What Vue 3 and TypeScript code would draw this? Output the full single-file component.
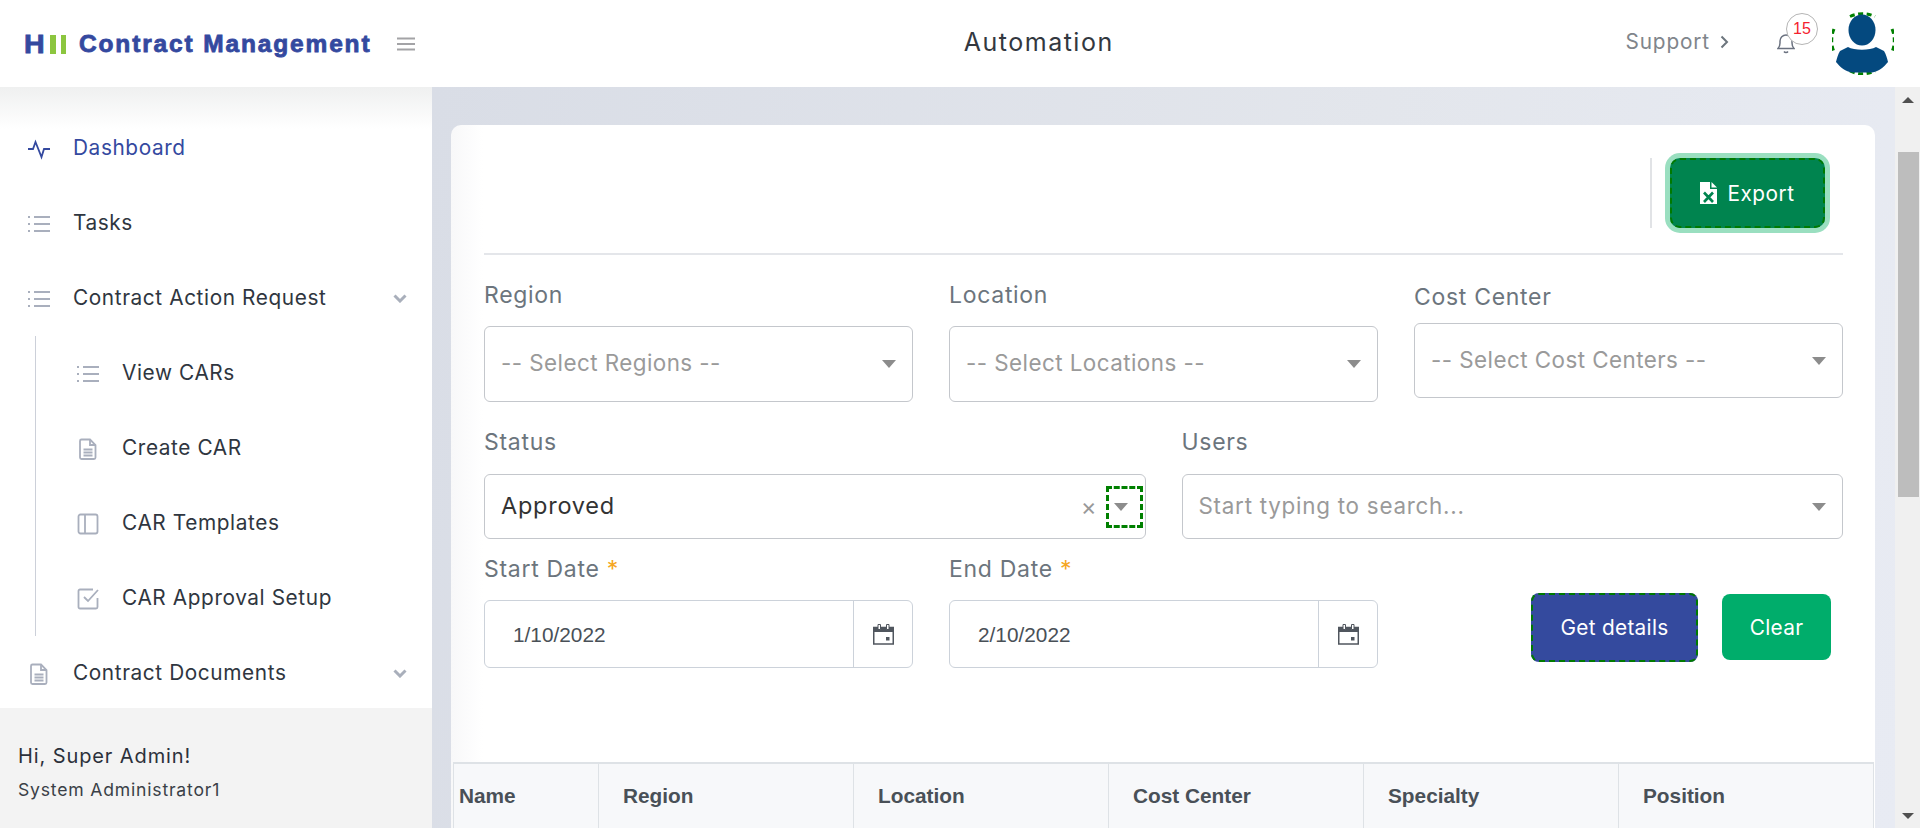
<template>
  <div class="page">
    <header class="topbar">
      <div class="brand">
        <span class="brand-h">H</span>
        <span class="brand-bars"><i></i><i></i></span>
        <span class="brand-name">Contract Management</span>
        <svg class="burger" width="18" height="14" viewBox="0 0 18 14"><path d="M0 1.5h18M0 7h18M0 12.5h18" stroke="#a3a3a6" stroke-width="2" /></svg>
      </div>
      <div class="title">Automation</div>
      <div class="top-right">
        <a class="support">Support
          <svg width="9" height="14" viewBox="0 0 9 14"><path d="M1.5 1.5 7 7l-5.500 5.500" fill="none" stroke="#6c757d" stroke-width="2" /></svg>
        </a>
        <div class="bell">
          <svg width="18" height="21" viewBox="0 0 18 21" fill="none" stroke="#6b7280" stroke-width="1.500"><path d="M1 15.500c1.500-1.500 2-2.500 2-5.500V8a6 6 0 0 1 12 0v2c0 3 .5 4 2 5.500z" /><path d="M7 18.500c.8 1.200 3.200 1.200 4 0" /></svg>
          <span class="badge">15</span>
        </div>
        <div class="avatar">
          <svg width="62" height="63" viewBox="0 0 62 63">
            <g fill="none" stroke="#008000" stroke-width="3" stroke-dasharray="5 3.500">
              <path d="M18 4.500A30 30 0 0 1 43 4.500" />
              <path d="M18 59A30 30 0 0 0 43 59" />
              <path d="M2 17A30 30 0 0 0 2 40" />
              <path d="M60 17A30 30 0 0 1 60 40" />
            </g>
            <ellipse cx="30" cy="18" rx="13.500" ry="15.500" fill="#04497f" />
            <path d="M16 35C22 38.500 38 38.500 44 35L52 39C54 42 55 46 56 50C52 55 46 60 40 60.500L20 60.500C14 60 8 55 4 50C5 46 6 42 8 39Z" fill="#04497f" />
          </svg>
        </div>
      </div>
    </header>

    <div class="body">
      <aside class="sidebar">
        <nav class="nav">
          <template v-for="item in navItems" :key="item.label">
            <a class="nav-item" :class="{ active: item.active }">
              <span class="nav-icon" v-html="icons[item.icon]"></span>
              <span class="nav-label">{{ item.label }}</span>
              <svg v-if="item.chevron" class="chev" width="14" height="9" viewBox="0 0 14 9"><path d="M1.500 1.500 7 7l5.500-5.500" fill="none" stroke="#a9afbb" stroke-width="3" /></svg>
            </a>
            <div v-if="item.children" class="subnav">
              <a v-for="child in item.children" :key="child.label" class="nav-item sub">
                <span class="nav-icon" v-html="icons[child.icon]"></span>
                <span class="nav-label">{{ child.label }}</span>
              </a>
            </div>
          </template>
        </nav>
        <div class="user-box">
          <div class="hi">Hi, Super Admin!</div>
          <div class="role">System Administrator1</div>
        </div>
      </aside>

      <main class="main">
        <section class="card">
          <div class="toolbar">
            <span class="vline"></span>
            <button class="export">
              <svg width="17" height="22" viewBox="0 0 17 22"><path d="M0 0h10v7h7v15H0z" fill="#fff" /><path d="M11.500 0 17 5.500h-5.500z" fill="#fff" /><path d="M4 10.500l9 9.500M13 10.500l-9 9.500" stroke="#00844f" stroke-width="2.600" /></svg>
              Export
            </button>
          </div>

          <div class="filters">
            <div class="row three">
              <div class="field">
                <label>Region</label>
                <div class="select tall"><span class="ph">-- Select Regions --</span><i class="caret"></i></div>
              </div>
              <div class="field">
                <label>Location</label>
                <div class="select tall"><span class="ph">-- Select Locations --</span><i class="caret"></i></div>
              </div>
              <div class="field cost">
                <label>Cost Center</label>
                <div class="select cost-box"><span class="ph">-- Select Cost Centers --</span><i class="caret"></i></div>
              </div>
            </div>
            <div class="row two">
              <div class="field mid">
                <label>Status</label>
                <div class="select short">
                  <span class="val">Approved</span>
                  <span class="clear-x">×</span>
                  <span class="focus-box"><i class="caret"></i></span>
                </div>
              </div>
              <div class="field mid">
                <label>Users</label>
                <div class="select short"><span class="ph">Start typing to search...</span><i class="caret"></i></div>
              </div>
            </div>
            <div class="row three">
              <div class="field date">
                <label>Start Date <em>*</em></label>
                <div class="date-box">
                  <span class="date-val">1/10/2022</span>
                  <span class="cal" v-html="calendar"></span>
                </div>
              </div>
              <div class="field date">
                <label>End Date <em>*</em></label>
                <div class="date-box">
                  <span class="date-val">2/10/2022</span>
                  <span class="cal" v-html="calendar"></span>
                </div>
              </div>
              <div class="actions">
                <button class="btn details">Get details</button>
                <button class="btn clear">Clear</button>
              </div>
            </div>
          </div>

          <table class="grid">
            <thead>
              <tr>
                <th v-for="col in columns" :key="col">{{ col }}</th>
              </tr>
            </thead>
          </table>
        </section>
      </main>

      <div class="scrollbar">
        <i class="arrow up"></i>
        <div class="track"><div class="thumb"></div></div>
        <i class="arrow down"></i>
      </div>
    </div>
  </div>
</template>

<script setup lang="ts">
interface NavChild { label: string; icon: string }
interface NavItem extends NavChild { active?: boolean; chevron?: boolean; children?: NavChild[] }

const svg = (inner: string) =>
  `<svg width="22" height="22" viewBox="0 0 22 22" fill="none" stroke="#a9afbd" stroke-width="1.800">${inner}</svg>`;

const icons: Record<string, string> = {
  activity: `<svg width="22" height="22" viewBox="0 0 22 22" fill="none" stroke="#34499f" stroke-width="1.800"><path d="M0 11h5l2.500-7 6 15 2.500-8h6" /></svg>`,
  list: svg('<path d="M6 4h16M6 11h16M6 18h16" /><path d="M0 4h2M0 11h2M0 18h2" />'),
  file: svg('<path d="M3.500 3a1.500 1.500 0 0 1 1.500-1.500h8.500L19 7v12.500a1.500 1.500 0 0 1-1.500 1.500H5a1.500 1.500 0 0 1-1.500-1.500z" transform="translate(-.5 0)" /><path d="M13 2v5h5.500M6.500 11.500h9M6.500 14.500h9M6.500 17.500h9" />'),
  side: svg('<rect x="1.500" y="1.500" width="19" height="19" rx="2" /><path d="M8 1.500v19" />'),
  check: svg('<path d="M20.500 10v9a1.500 1.500 0 0 1-1.500 1.500H3A1.500 1.500 0 0 1 1.500 19V3A1.500 1.500 0 0 1 3 1.500h13" /><path d="M7 9l4 4L21 2" />'),
};

const calendar = `<svg width="21" height="21" viewBox="0 0 21 21"><rect x="0.750" y="3.500" width="19.500" height="16.500" fill="none" stroke="#50565e" stroke-width="1.500" /><path d="M0 3h21v5H0z" fill="#50565e" /><path d="M5 .5h2.500v5H5zM13.500 .5H16v5h-2.500z" fill="#fff" stroke="#50565e" stroke-width="1" /><rect x="13" y="13" width="3.500" height="3.500" fill="#50565e" /></svg>`;

const navItems: NavItem[] = [
  { label: 'Dashboard', icon: 'activity', active: true },
  { label: 'Tasks', icon: 'list' },
  {
    label: 'Contract Action Request',
    icon: 'list',
    chevron: true,
    children: [
      { label: 'View CARs', icon: 'list' },
      { label: 'Create CAR', icon: 'file' },
      { label: 'CAR Templates', icon: 'side' },
      { label: 'CAR Approval Setup', icon: 'check' },
    ],
  },
  { label: 'Contract Documents', icon: 'file', chevron: true },
];

const columns = ['Name', 'Region', 'Location', 'Cost Center', 'Specialty', 'Position'];
</script>

<style>
html,
body {
  margin: 0;
  height: 100%;
  overflow: hidden;
  background: #fff;
}
</style>

<style scoped>
.page {
  height: 100vh;
  display: flex;
  flex-direction: column;
  font-family: Inter, "Liberation Sans", sans-serif;
  color: #2f3640;
  overflow: hidden;
}

.topbar {
  height: 87px;
  flex: none;
  display: flex;
  align-items: center;
  background: #fff;
  position: relative;
}

.brand {
  width: 432px;
  flex: none;
  box-sizing: border-box;
  padding-left: 24px;
  display: flex;
  align-items: center;
  color: #34499f;
  padding-top: 1px;
}

.brand-h {
  font: 700 26px "Liberation Sans", sans-serif;
  -webkit-text-stroke: 0.8px #34499f;
  width: 26px;
  transform: scaleX(1.1);
  transform-origin: left center;
}

.brand-bars {
  display: flex;
  gap: 5px;
  width: 29px;
}

.brand-bars i {
  width: 5.500px;
  height: 19px;
  background: #8cc63f;
}

.brand-name {
  width: 292px;
  font: 700 24.500px "Liberation Sans", sans-serif;
  -webkit-text-stroke: 0.8px #34499f;
  letter-spacing: 1.850px;
  white-space: nowrap;
}

.burger {
  margin-left: 26px;
}

.title {
  flex: 1;
  padding: 0 0 3px 20px;
  text-align: center;
  font-size: 25px;
  letter-spacing: 1.500px;
  color: #33383f;
}

.top-right {
  display: flex;
  align-items: center;
  padding-right: 26px;
}

.support {
  font-size: 20.800px;
  letter-spacing: 0.850px;
  color: #80858b;
  display: flex;
  align-items: center;
  gap: 10px;
  margin-right: 48px;
  padding-bottom: 4px;
}

.bell {
  position: relative;
  width: 18px;
  height: 21px;
  margin-right: 37px;
}

.badge {
  position: absolute;
  left: 9px;
  top: -20px;
  width: 30px;
  height: 30px;
  border: 1px solid #b5b5b5;
  border-radius: 50%;
  background: #fff;
  color: #f4212e;
  font: 16px/30px "Liberation Sans", sans-serif;
  text-align: center;
}

.avatar {
  width: 62px;
  height: 63px;
}

.avatar svg {
  display: block;
}

.body {
  flex: 1;
  min-height: 0;
  display: flex;
}

.sidebar {
  width: 432px;
  flex: none;
  display: flex;
  flex-direction: column;
  background: linear-gradient(180deg, #eff0f0 0, #fff 42px);
}

.nav {
  flex: 1;
  min-height: 0;
  overflow: hidden;
  padding-top: 24px;
}

.nav-item {
  height: 75px;
  display: flex;
  align-items: center;
  padding: 0 25px 0 28px;
  font-size: 20.800px;
  letter-spacing: 0.600px;
  color: #2f3640;
}

.nav-item.active {
  color: #34499f;
}

.nav-label {
  flex: 1;
  white-space: nowrap;
  padding-bottom: 2px;
  margin-left: -1px;
}

.nav-icon {
  width: 46px;
  flex: none;
  display: flex;
}

.subnav {
  margin-left: 35px;
  border-left: 1px solid #ccd0d9;
}

.nav-item.sub {
  padding-left: 41px;
}

.user-box {
  height: 120px;
  flex: none;
  box-sizing: border-box;
  padding: 33px 18px 0;
  background: #f3f3f3;
}

.hi {
  font-size: 20px;
  letter-spacing: 0.900px;
  line-height: 30px;
  color: #2b303a;
}

.role {
  margin-top: 6px;
  font-size: 17.600px;
  letter-spacing: 0.800px;
  line-height: 26px;
  color: #3a3f47;
}

.main {
  flex: 1;
  min-width: 0;
  box-sizing: border-box;
  padding: 38px 20px 0 19px;
  border-top: 1px solid;
  border-image: linear-gradient(90deg, #3a4c9a, #55686f 50%, #6a9a6a) 1;
  margin-top: -1px;
  background: linear-gradient(100deg, #d9dde6 0%, #e3e6ec 60%, #e8ebf3 100%);
  overflow: hidden;
}

.card {
  height: 100%;
  background: linear-gradient(90deg, #f8f8f9 0, #fff 32px);
  border-radius: 10px 10px 0 0;
}

.toolbar {
  margin: 0 32px 0 33px;
  padding: 33px 18px 25px 0;
  display: flex;
  justify-content: flex-end;
  gap: 18px;
  border-bottom: 2px solid #e4e6ea;
}

.vline {
  width: 2px;
  background: #e1e3e6;
}

.export {
  width: 155px;
  height: 70px;
  box-sizing: border-box;
  display: flex;
  align-items: center;
  justify-content: center;
  gap: 10px;
  background: #00844f;
  color: #fff;
  border: 0;
  outline: 2px dashed #007a00;
  outline-offset: -2px;
  border-radius: 10px;
  box-shadow: 0 0 0 5px #9adfc0;
  font: 20.800px Inter, sans-serif;
  letter-spacing: 0.500px;
}

.filters {
  padding: 26px 32px 0 33px;
}

.row {
  display: grid;
  gap: 36px;
}

.row.three {
  grid-template-columns: repeat(3, 429px);
}

.row.two {
  grid-template-columns: 1fr 1fr;
  margin-top: 26px;
}

.row.three + .row.two + .row.three {
  margin-top: 16px;
}

label {
  display: block;
  height: 28px;
  line-height: 28px;
  font-size: 23px;
  letter-spacing: 0.700px;
  color: #6c757d;
  white-space: nowrap;
}

label em {
  font-style: normal;
  color: #f5a623;
}

.field {
  display: flex;
  flex-direction: column;
}

.select {
  box-sizing: border-box;
  display: flex;
  align-items: center;
  padding: 0 16px 0 16px;
  border: 1px solid #c4c7cc;
  border-radius: 6px;
  font-size: 22.400px;
  letter-spacing: 0.450px;
}

.tall {
  height: 76px;
  margin-top: 17px;
}

.tall .ph {
  padding-bottom: 4px;
}

.cost {
  padding-top: 2px;
}

.cost-box {
  height: 75px;
  margin-top: 12px;
}

.short {
  height: 65px;
  margin-top: 18px;
  letter-spacing: 0.750px;
}

.ph {
  flex: 1;
  color: #9a9a9a;
  padding-bottom: 2px;
}

.val {
  flex: 1;
  color: #333;
  font-size: 23.500px;
  padding-bottom: 2px;
}

.caret {
  width: 0;
  height: 0;
  border: 7.500px solid transparent;
  border-top: 8px solid #8c8c8c;
  border-bottom: 0;
}

.clear-x {
  color: #999;
  font-size: 24px;
  margin-right: 8px;
}

.focus-box {
  width: 37px;
  height: 42px;
  box-sizing: border-box;
  margin-right: -14px;
  padding-right: 6px;
  display: flex;
  align-items: center;
  justify-content: center;
  border: 3px dashed #008000;
}

.date-box {
  height: 68px;
  margin-top: 17px;
  box-sizing: border-box;
  display: flex;
  align-items: center;
  border: 1px solid #ccd2da;
  border-radius: 6px;
}

.date-val {
  flex: 1;
  padding: 1px 0 0 28px;
  font: 20.800px "Liberation Sans", sans-serif;
  color: #495057;
}

.cal {
  width: 59px;
  height: 100%;
  box-sizing: border-box;
  display: flex;
  align-items: center;
  justify-content: center;
  border-left: 1px solid #ccd2da;
}

.actions {
  display: flex;
  align-items: center;
  justify-content: flex-end;
  gap: 24px;
  padding: 31px 12px 0 0;
}

.btn {
  border: 0;
  border-radius: 8px;
  color: #fff;
  font: 20.800px Inter, sans-serif;
  letter-spacing: 0.300px;
}

.details {
  width: 167px;
  height: 69px;
  background: #344a9e;
  outline: 2px dashed #007a00;
  outline-offset: -2px;
}

.clear {
  width: 109px;
  height: 66px;
  background: #00ad6b;
}

.grid {
  width: 1420px;
  margin: 94px 2px 0;
  border-collapse: collapse;
  table-layout: fixed;
  background: #f7f8fa;
  border-top: 2px solid #dee2e6;
}

.grid th {
  height: 66px;
  width: 255px;
  box-sizing: border-box;
  padding: 0 0 0 24px;
  border: 1px solid #dee2e6;
  border-top: 0;
  text-align: left;
  font: 700 20.800px "Liberation Sans", sans-serif;
  color: #495057;
}

.grid th:first-child {
  width: 145px;
  padding-left: 5px;
}

.scrollbar {
  width: 25px;
  flex: none;
  display: flex;
  flex-direction: column;
  align-items: center;
  background: #f0f0f0;
}

.track {
  flex: 1;
  width: 21px;
  padding-top: 49px;
  margin-left: 2px;
}

.thumb {
  height: 345px;
  background: #bdbdbd;
}

.arrow {
  width: 0;
  height: 0;
  flex: none;
  border-left: 6px solid transparent;
  border-right: 6px solid transparent;
}

.arrow.up {
  margin-top: 10px;
  border-bottom: 6px solid #505050;
}

.arrow.down {
  margin-bottom: 9px;
  border-top: 6px solid #505050;
}
</style>
